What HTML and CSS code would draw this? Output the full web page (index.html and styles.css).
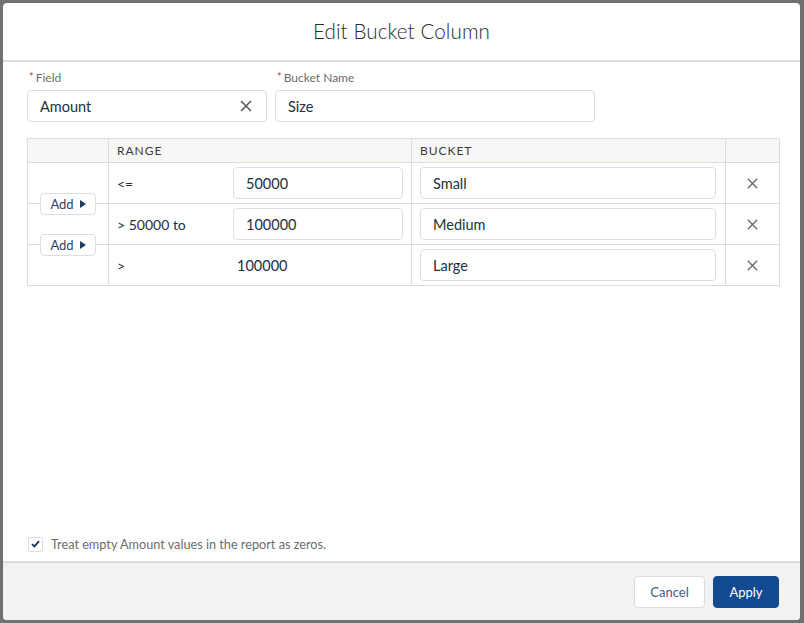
FILE: index.html
```html
<!DOCTYPE html>
<html>
<head>
<meta charset="utf-8">
<link rel="stylesheet" href="styles.css">
</head>
<body>
<div class="backdrop">
  <div class="modal">
    <header class="modal-header">
      <h2 class="title">Edit Bucket Column</h2>
    </header>
    <div class="modal-body">
      <div class="fields">
        <div class="field field-name">
          <label class="label"><abbr class="req">*</abbr>Field</label>
          <div class="input with-clear">
            <span class="value">Amount</span>
            <svg class="clear" width="12" height="12" viewBox="0 0 12 12"><path d="M1 1L11 11M11 1L1 11" stroke="#5a5a5a" stroke-width="1.6" fill="none"/></svg>
          </div>
        </div>
        <div class="field field-bucket">
          <label class="label"><abbr class="req">*</abbr>Bucket Name</label>
          <div class="input"><span class="value">Size</span></div>
        </div>
      </div>

      <div class="grid">
        <div class="cell head c-add"></div>
        <div class="cell head c-range">RANGE</div>
        <div class="cell head c-bucket">BUCKET</div>
        <div class="cell head c-del"></div>

        <div class="cell c-add">
          <button class="add">Add <span class="tri"></span></button>
        </div>
        <div class="cell c-range">
          <span class="op">&lt;=</span>
          <div class="input small"><span class="value">50000</span></div>
        </div>
        <div class="cell c-bucket"><div class="input wide"><span class="value">Small</span></div></div>
        <div class="cell c-del"><svg width="11" height="11" viewBox="0 0 11 11"><path d="M0.8 0.8L10.2 10.2M10.2 0.8L0.8 10.2" stroke="#6b6b6b" stroke-width="1.4" fill="none"/></svg></div>

        <div class="cell c-add">
          <button class="add">Add <span class="tri"></span></button>
        </div>
        <div class="cell c-range">
          <span class="op">&gt; 50000 to</span>
          <div class="input small"><span class="value">100000</span></div>
        </div>
        <div class="cell c-bucket"><div class="input wide"><span class="value">Medium</span></div></div>
        <div class="cell c-del"><svg width="11" height="11" viewBox="0 0 11 11"><path d="M0.8 0.8L10.2 10.2M10.2 0.8L0.8 10.2" stroke="#6b6b6b" stroke-width="1.4" fill="none"/></svg></div>

        <div class="cell c-add last"></div>
        <div class="cell c-range last">
          <span class="op">&gt;</span>
          <span class="static">100000</span>
        </div>
        <div class="cell c-bucket last"><div class="input wide"><span class="value">Large</span></div></div>
        <div class="cell c-del last"><svg width="11" height="11" viewBox="0 0 11 11"><path d="M0.8 0.8L10.2 10.2M10.2 0.8L0.8 10.2" stroke="#6b6b6b" stroke-width="1.4" fill="none"/></svg></div>
      </div>

      <label class="check-row">
        <span class="checkbox"><svg width="9" height="8" viewBox="0 0 9 8"><path d="M1 4.2L3.4 6.4L8 1.2" stroke="#16325c" stroke-width="1.8" fill="none"/></svg></span>
        <span class="check-text">Treat empty Amount values in the report as zeros.</span>
      </label>
    </div>
    <footer class="modal-footer">
      <button class="btn btn-neutral">Cancel</button>
      <button class="btn btn-brand">Apply</button>
    </footer>
  </div>
</div>
</body>
</html>
```

FILE: styles.css
```css
* { box-sizing: border-box; }
html, body { margin: 0; padding: 0; }
body {
  background: #707070;
  font-family: Lato, "Noto Sans", "Liberation Sans", sans-serif;
  width: 804px;
  height: 623px;
  overflow: hidden;
}
.backdrop {
  padding: 3px 4px 3px 3px;
  height: 623px;
}
.modal {
  width: 797px;
  height: 617px;
  background: #fff;
  border-radius: 4px;
  display: flex;
  flex-direction: column;
  overflow: hidden;
}
.modal-header {
  height: 59px;
  border-bottom: 2px solid #dddbda;
  display: flex;
  align-items: center;
  justify-content: center;
  flex: none;
}
.title {
  margin: 0;
  font-weight: 300;
  font-size: 20.6px;
  color: #2b2b2b;
  letter-spacing: 0.1px;
  padding-bottom: 2px;
}
.modal-body {
  flex: 1;
  display: flex;
  flex-direction: column;
  padding: 7px 21px 9px 24px;
}
.fields {
  display: flex;
  gap: 8px;
}
.field { display: flex; flex-direction: column; }
.field-name { width: 240px; }
.field-bucket { width: 320px; }
.label {
  font-size: 12px;
  line-height: 16px;
  color: #6b6d70;
  margin-bottom: 4px;
  padding-left: 1px;
}
.req {
  color: #c23934;
  text-decoration: none;
  font-size: 11px;
  margin: 0 2px 0 1px;
  vertical-align: 1px;
}
.input {
  height: 32px;
  border: 1px solid #d8dde6;
  border-radius: 4px;
  display: flex;
  align-items: center;
  padding: 0 12px;
  background: #fff;
}
.value {
  font-size: 14.5px;
  color: #24303d;
}
.with-clear { justify-content: space-between; padding-right: 14px; }
.clear { display: block; }

.grid {
  margin-top: 16px;
  width: 752px;
  display: grid;
  grid-template-columns: 81px 303px 314px 54px;
  border-top: 1px solid #dcdcdc;
  border-left: 1px solid #dcdcdc;
}
.cell {
  border-right: 1px solid #dcdcdc;
  border-bottom: 1px solid #dcdcdc;
  height: 41px;
  display: flex;
  align-items: center;
  position: relative;
}
.cell.head {
  height: 24px;
  background: #f7f7f6;
  font-size: 12px;
  letter-spacing: 0.08em;
  color: #3b3b3b;
  padding-left: 8px;
}
.c-range { padding-left: 8px; }
.c-bucket { padding-left: 8px; }
.c-del { justify-content: center; }
.op {
  width: 116px;
  font-size: 14px;
  color: #24303d;
  flex: none;
}
.input.small { width: 170px; padding-left: 12px; }
.input.wide { width: 296px; }
.static {
  font-size: 14.5px;
  color: #24303d;
  padding-left: 4px;
}
.add {
  position: absolute;
  left: 12px;
  bottom: -12px;
  z-index: 2;
  width: 56px;
  height: 22px;
  background: #fff;
  border: 1px solid #d8dde6;
  border-radius: 4px;
  font-family: inherit;
  font-size: 13px;
  color: #2a4466;
  display: flex;
  align-items: center;
  justify-content: center;
  gap: 6px;
  padding: 0;
}
.tri {
  width: 0;
  height: 0;
  border-top: 4.5px solid transparent;
  border-bottom: 4.5px solid transparent;
  border-left: 6px solid #1f3a5f;
}

.check-row {
  margin-top: auto;
  display: flex;
  align-items: center;
  gap: 8px;
  padding-left: 1px;
}
.checkbox {
  width: 15px;
  height: 15px;
  border: 1px solid #d8dde6;
  border-radius: 2px;
  display: flex;
  align-items: center;
  justify-content: center;
}
.check-text {
  font-size: 12.7px;
  color: #6b6d70;
}

.modal-footer {
  flex: none;
  height: 59px;
  border-top: 2px solid #dddbda;
  background: #f3f2f2;
  display: flex;
  justify-content: flex-end;
  align-items: flex-start;
  gap: 8px;
  padding: 13px 21px 0 0;
}
.btn {
  height: 32px;
  border-radius: 4px;
  font-family: inherit;
  font-size: 13px;
  padding: 0;
}
.btn-neutral {
  width: 71px;
  background: #fff;
  border: 1px solid #dddbda;
  color: #3d5c88;
}
.btn-brand {
  width: 66px;
  background: #144a8f;
  border: 1px solid #144a8f;
  color: #fff;
}
```
